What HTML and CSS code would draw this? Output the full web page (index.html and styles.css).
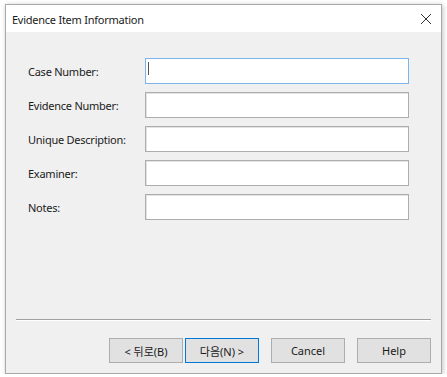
FILE: index.html
```html
<!DOCTYPE html>
<html lang="en">
<head>
  <meta charset="UTF-8" />
  <title>Evidence Item Information</title>
  <link rel="stylesheet" href="styles.css">
</head>
<body>

  <div class="window">
    <div class="titlebar">
      <span class="title">Evidence Item Information</span>
      <svg class="close" width="12" height="12" viewBox="0 0 12 12">
        <path d="M1 1 L11 11 M11 1 L1 11" stroke="#333" stroke-width="1" fill="none"/>
      </svg>
    </div>

    <div class="form">
      <div class="row">
        <label>Case Number:</label>
        <div class="field focused"><span class="caret"></span></div>
      </div>
      <div class="row">
        <label>Evidence Number:</label>
        <div class="field"></div>
      </div>
      <div class="row">
        <label>Unique Description:</label>
        <div class="field"></div>
      </div>
      <div class="row">
        <label>Examiner:</label>
        <div class="field"></div>
      </div>
      <div class="row">
        <label>Notes:</label>
        <div class="field"></div>
      </div>
    </div>

    <div class="separator"></div>

    <div class="buttons">
      <button class="btn back">&lt; 뒤로(B)</button>
      <button class="btn next default">다음(N) &gt;</button>
      <button class="btn">Cancel</button>
      <button class="btn">Help</button>
    </div>
  </div>

</body>
</html>
```

FILE: styles.css
```css
body {
  margin: 0;
  padding: 0;
  background: #fff;
  font-family: 'Noto Sans', 'Noto Sans CJK KR', sans-serif;
  font-size: 11px;
  letter-spacing: -0.25px;
  color: #1a1a1a;
}

.window {
  margin: 4px 0 0 5px;
  width: 437px;
  height: 370px;
  box-sizing: border-box;
  border: 1px solid #a8a8a8;
  box-shadow: 1px 1px 5px rgba(0,0,0,0.25);
  background: #f0f0f0;
  display: flex;
  flex-direction: column;
}

.titlebar {
  height: 27px;
  background: #fff;
  display: flex;
  align-items: center;
  justify-content: space-between;
  padding: 0 9px 0 6px;
  flex-shrink: 0;
}

.title {
  font-size: 11px;
  margin-top: 1px;
}

.close {
  margin-top: 1px;
}

.form {
  flex: 1;
  padding: 26px 0 0 22px;
  display: flex;
  flex-direction: column;
  gap: 8px;
}

.row {
  display: flex;
  align-items: center;
  height: 26px;
}

.row label {
  width: 117px;
}

.field {
  position: relative;
  width: 264px;
  height: 26px;
  box-sizing: border-box;
  background: #fff;
  border: 1px solid #adadad;
  box-shadow: inset 1px 1px 0 #e3e3e3;
}

.field.focused {
  border-color: #7ab4ea;
  box-shadow: none;
}

.caret {
  position: absolute;
  left: 2px;
  top: 3px;
  width: 1px;
  height: 13px;
  background: #555;
}

.separator {
  margin: 0 10px;
  height: 0;
  border-top: 1px solid #a0a0a0;
  border-bottom: 1px solid #fff;
  flex-shrink: 0;
}

.buttons {
  display: flex;
  justify-content: flex-end;
  padding: 17px 10px 10px 0;
  flex-shrink: 0;
}

.btn {
  width: 74px;
  height: 25px;
  box-sizing: border-box;
  border: 1px solid #adadad;
  background: #e1e1e1;
  font-family: 'Noto Sans', 'Noto Sans CJK KR', sans-serif;
  font-size: 11px;
  color: #1a1a1a;
  padding: 0;
  margin-left: 12px;
}

.btn.next {
  margin-left: 2px;
}

.btn.default {
  border: 1px solid #0078d7;
}
```
